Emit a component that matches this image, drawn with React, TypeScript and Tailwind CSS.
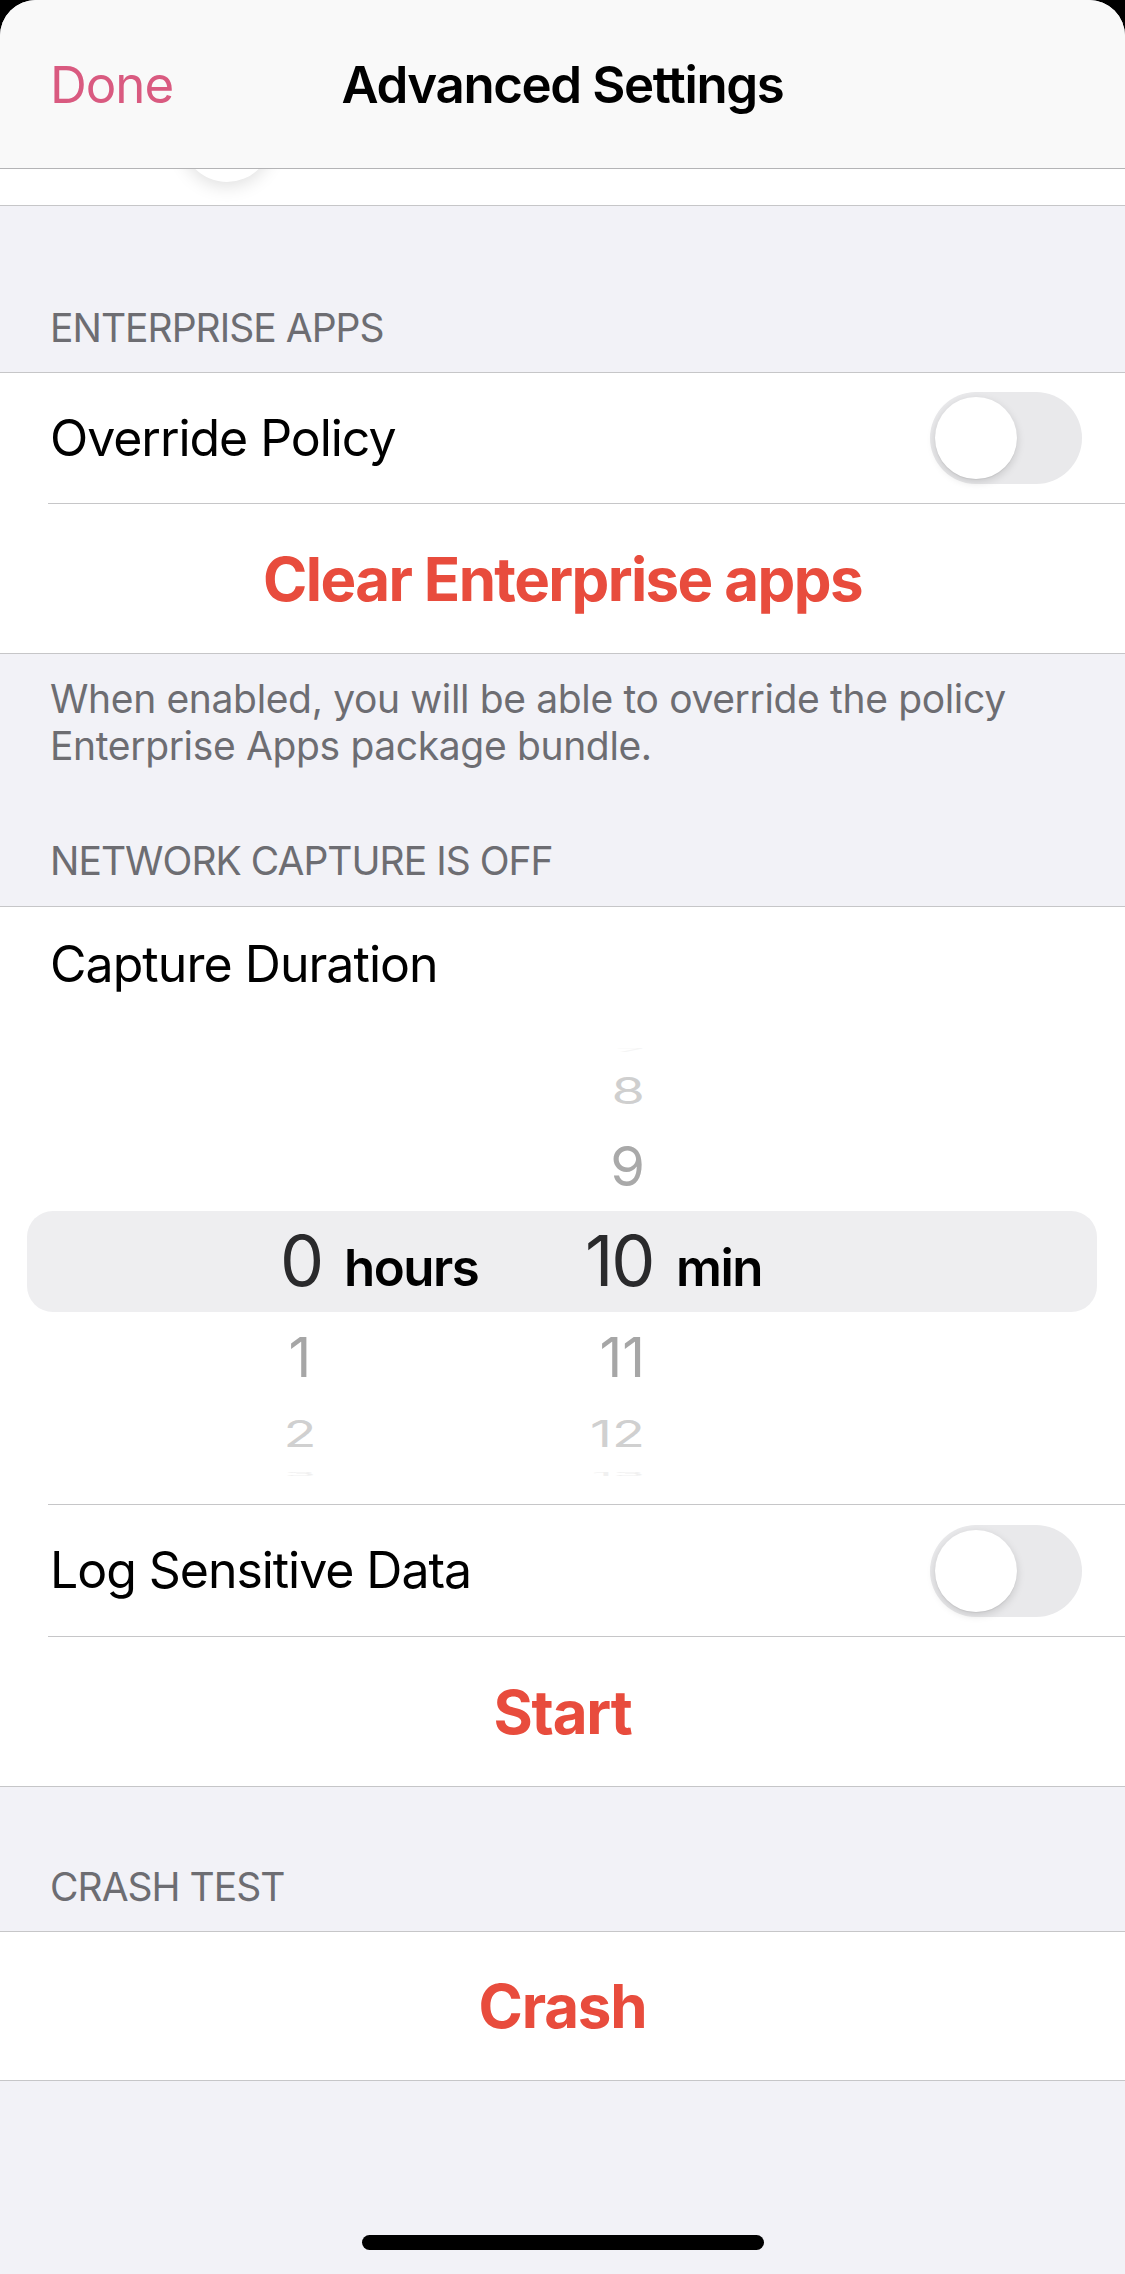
import React from "react";

function Toggle() {
  return (
    <div className="relative w-[152px] h-[92px] rounded-full bg-[#e9e9eb]">
      <div className="absolute left-[5px] top-[5px] w-[82px] h-[82px] rounded-full bg-white shadow-[0_3px_8px_rgba(0,0,0,0.15),0_1px_1px_rgba(0,0,0,0.06)]" />
    </div>
  );
}

type PRow = { h: string; hrs: string; min: string; cls: string };

const rowsAbove: PRow[] = [
  { h: "h-[40px]", hrs: "", min: "7", cls: "text-[52px] text-[#f5f5f5] scale-y-[0.08]" },
  { h: "h-[40px]", hrs: "", min: "8", cls: "text-[54px] text-[#cfcfcf] scale-y-[0.68]" },
  { h: "h-[110px]", hrs: "", min: "9", cls: "text-[56px] text-[#a9a9a9] scale-y-[0.98]" },
];
const rowsBelow: PRow[] = [
  { h: "h-[112px]", hrs: "1", min: "11", cls: "text-[56px] text-[#a6a6a6] scale-y-[0.98]" },
  { h: "h-[42px]", hrs: "2", min: "12", cls: "text-[54px] text-[#d0d0d0] scale-y-[0.68]" },
  { h: "h-[38px]", hrs: "3", min: "13", cls: "text-[52px] text-[#f0f0f0] scale-y-[0.1]" },
];

function PickerRow({ r }: { r: PRow }) {
  return (
    <div className={`${r.h} flex items-center pl-[220px]`}>
      <div className="w-[160px] flex justify-center">
        <span className={`block leading-none ${r.cls}`}>{r.hrs}</span>
      </div>
      <div className="w-[265px] flex justify-end">
        <span className={`block leading-none ${r.cls}`}>{r.min}</span>
      </div>
    </div>
  );
}

export default function App() {
  return (
    <div className="w-[1125px] h-[2274px] bg-black relative overflow-hidden font-['Inter',sans-serif]">
      <div className="h-full bg-[#f2f2f7] rounded-t-[36px] overflow-hidden flex flex-col">
        {/* Nav bar */}
        <div className="h-[169px] shrink-0 bg-[#f9f9f9] border-b border-[#b4b4b6] relative flex items-center justify-center">
          <span className="absolute left-[50px] text-[51px] text-[#d95a80] leading-none tracking-[-0.02em]">Done</span>
          <span className="text-[51px] font-semibold text-black leading-none tracking-[-0.027em]">Advanced Settings</span>
        </div>

        {/* partially scrolled row */}
        <div className="h-[37px] shrink-0 bg-white border-b border-[#c6c6c8] relative overflow-hidden">
          <div className="absolute left-[182px] top-[-77px] w-[90px] h-[90px] rounded-full bg-white shadow-[0_4px_18px_rgba(0,0,0,0.13)]" />
        </div>

        {/* Header 1 */}
        <div className="h-[166px] shrink-0 flex items-end px-[50px] pb-[21px]">
          <span className="text-[39px] leading-[47px] text-[#6d6d72] tracking-[-0.025em]">ENTERPRISE APPS</span>
        </div>

        {/* Section 1 */}
        <div className="bg-white border-y border-[#c6c6c8] shrink-0">
          <div className="h-[130px] flex items-center justify-between pl-[50px] pr-[43px]">
            <span className="text-[50px] text-black tracking-[-0.021em]">Override Policy</span>
            <Toggle />
          </div>
          <div className="ml-[48px] h-px bg-[#c6c6c8]" />
          <div className="h-[149px] flex items-center justify-center">
            <span className="text-[60px] font-bold text-[#e84c3d] tracking-[-0.027em]">Clear Enterprise apps</span>
          </div>
        </div>

        {/* Footer + Header 2 */}
        <div className="px-[50px] pt-[21px] shrink-0 tracking-[-0.022em]">
          <p className="text-[39px] leading-[47px] text-[#6d6d72]">
            When enabled, you will be able to override the policy
            <br />
            Enterprise Apps package bundle.
          </p>
          <p className="mt-[68px] pb-[22px] text-[39px] leading-[47px] text-[#6d6d72] tracking-[-0.025em]">NETWORK CAPTURE IS OFF</p>
        </div>

        {/* Section 2 */}
        <div className="bg-white border-y border-[#c6c6c8] shrink-0">
          <div className="h-[113px] flex items-center pl-[50px]">
            <span className="text-[50px] text-black leading-[60px] tracking-[-0.019em]">Capture Duration</span>
          </div>
          {/* Picker */}
          <div className="h-[484px] relative pt-[11px] overflow-hidden">
            <div className="absolute left-[27px] right-[28px] top-[191px] h-[101px] rounded-[26px] bg-[#eeeef0]" />
            <div className="relative">
              {rowsAbove.map((r, i) => (
                <PickerRow key={"a" + i} r={r} />
              ))}
              <div className="h-[80px] pt-[5px] flex items-baseline pl-[280px]">
                <div className="w-[64px]">
                  <span className="text-[70px] leading-none text-[#2a2a2c] tracking-[-0.02em]">0</span>
                </div>
                <div className="w-[241px]">
                  <span className="text-[51px] font-semibold leading-none text-black tracking-[-0.03em]">hours</span>
                </div>
                <div className="w-[91px]">
                  <span className="text-[70px] leading-none text-[#2a2a2c] tracking-[-0.03em]">10</span>
                </div>
                <div>
                  <span className="text-[51px] font-semibold leading-none text-black tracking-[-0.03em]">min</span>
                </div>
              </div>
              {rowsBelow.map((r, i) => (
                <PickerRow key={"b" + i} r={r} />
              ))}
            </div>
          </div>
          <div className="ml-[48px] h-px bg-[#c6c6c8]" />
          <div className="h-[131px] flex items-center justify-between pl-[50px] pr-[43px]">
            <span className="text-[50px] text-black tracking-[-0.021em]">Log Sensitive Data</span>
            <Toggle />
          </div>
          <div className="ml-[48px] h-px bg-[#c6c6c8]" />
          <div className="h-[149px] flex items-center justify-center">
            <span className="text-[60px] font-bold text-[#e84c3d] tracking-[-0.02em]">Start</span>
          </div>
        </div>

        {/* Header 3 */}
        <div className="px-[50px] pt-[76px] pb-[21px] shrink-0">
          <p className="text-[39px] leading-[47px] text-[#6d6d72] tracking-[-0.025em]">CRASH TEST</p>
        </div>

        {/* Section 3 */}
        <div className="bg-white border-y border-[#c6c6c8] shrink-0">
          <div className="h-[148px] flex items-center justify-center">
            <span className="text-[60px] font-bold text-[#e84c3d] tracking-[-0.02em]">Crash</span>
          </div>
        </div>

        <div className="flex-1" />
      </div>

      {/* Home indicator */}
      <div className="absolute left-[362px] top-[2235px] w-[402px] h-[15px] rounded-full bg-black" />
    </div>
  );
}
